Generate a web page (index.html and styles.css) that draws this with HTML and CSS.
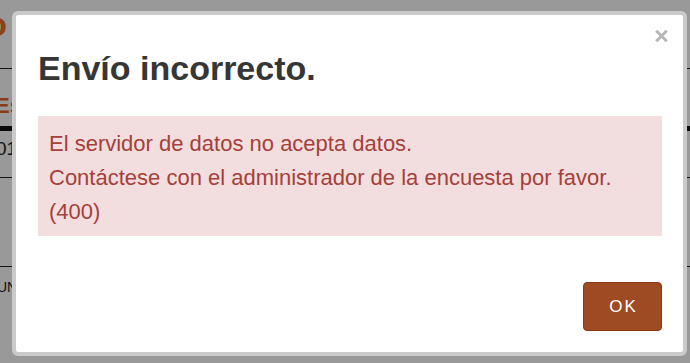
FILE: index.html
```html
<!DOCTYPE html>
<html lang="es">
<head>
<meta charset="utf-8">
<title>Envío incorrecto</title>
<link rel="stylesheet" href="styles.css">
</head>
<body>
<div class="page">
  <h1 class="page-title">Registro de la encuesta</h1>
  <div class="section-label">Estado</div>
  <div class="rule-thick"></div>
  <div class="row-date">01/2024</div>
  <div class="row-gap"></div>
  <div class="row-small">UNIDAD</div>
</div>

<div class="backdrop"></div>

<div class="modal" role="dialog" aria-labelledby="modal-title">
  <div class="modal-header">
    <h2 class="modal-title" id="modal-title">Envío incorrecto.</h2>
    <button class="close" type="button" aria-label="Cerrar">
      <svg width="13" height="12" viewBox="0 0 13 12" aria-hidden="true">
        <path d="M1.2 0.8 L11.8 11.2 M11.8 0.8 L1.2 11.2" stroke="#b7b7b7" stroke-width="3" stroke-linecap="butt" fill="none"/>
      </svg>
    </button>
  </div>
  <div class="modal-body">
    <div class="alert">El servidor de datos no acepta datos.<br>Contáctese con el administrador de la encuesta por favor.<br>(400)</div>
  </div>
  <div class="modal-footer">
    <button class="btn-ok" type="button">OK</button>
  </div>
</div>
</body>
</html>
```

FILE: styles.css
```css
html, body {
  margin: 0;
  padding: 0;
}

body {
  background: #ffffff;
  font-family: "Liberation Sans", Arial, sans-serif;
  overflow: hidden;
}

/* page behind the dialog */
.page {
  width: 690px;
}

.page-title {
  box-sizing: border-box;
  height: 69px;
  margin: 0 0 0 -131px;
  padding-top: 4px;
  font: bold 34px/40px "Liberation Sans", Arial, sans-serif;
  color: #e8712f;
  white-space: nowrap;
  border-bottom: 1px solid #222222;
}

.section-label {
  box-sizing: border-box;
  height: 57px;
  margin-left: -5px;
  padding-top: 22px;
  font: bold 22px/30px "Liberation Sans", Arial, sans-serif;
  color: #e0682a;
  white-space: nowrap;
}

.rule-thick {
  height: 5px;
  background: #111111;
}

.row-date {
  box-sizing: border-box;
  height: 47px;
  margin-left: -4px;
  padding-top: 6px;
  font: 19px/24px "Liberation Sans", Arial, sans-serif;
  color: #222222;
  border-bottom: 1px solid #222222;
  white-space: nowrap;
}

.row-gap {
  height: 88px;
  border-bottom: 1px solid #222222;
}

.row-small {
  margin-left: -3px;
  padding-top: 12px;
  font: 14px/16px "Liberation Sans", Arial, sans-serif;
  color: #222222;
  white-space: nowrap;
}

/* dim layer */
.backdrop {
  position: fixed;
  inset: 0;
  background: rgba(0, 0, 0, 0.4);
}

/* dialog */
.modal {
  position: fixed;
  left: 12px;
  top: 11px;
  width: 675px;
  height: 345px;
  box-sizing: border-box;
  border: 4px solid #cacaca;
  border-radius: 6px;
  background: #ffffff;
  display: flex;
  flex-direction: column;
  font-family: "Liberation Sans", Arial, sans-serif;
}

.modal-header {
  display: flex;
  justify-content: space-between;
  align-items: flex-start;
  padding: 15px 15px 0 22px;
}

.modal-title {
  margin: 18px 0 0;
  font: bold 34px/40px "Liberation Sans", Arial, sans-serif;
  color: #363636;
}

.close {
  display: block;
  width: 13px;
  height: 12px;
  padding: 0;
  margin: 0;
  border: 0;
  background: none;
  cursor: pointer;
}

.close svg {
  display: block;
}

.modal-body {
  padding: 28px 21px 0 22px;
}

.alert {
  padding: 11px 11px 7px;
  background: #f2dede;
  color: #a5403b;
  font-size: 22px;
  line-height: 34px;
}

.modal-footer {
  display: flex;
  justify-content: flex-end;
  padding: 46px 21px 0;
}

.btn-ok {
  box-sizing: border-box;
  width: 79px;
  height: 49px;
  padding: 0 0 0 2px;
  background: #9e4a22;
  border: 1px solid #8a3a15;
  border-radius: 4px;
  color: #ffffff;
  font: 17px/1 "Liberation Sans", Arial, sans-serif;
  letter-spacing: 2px;
  cursor: pointer;
}
```
